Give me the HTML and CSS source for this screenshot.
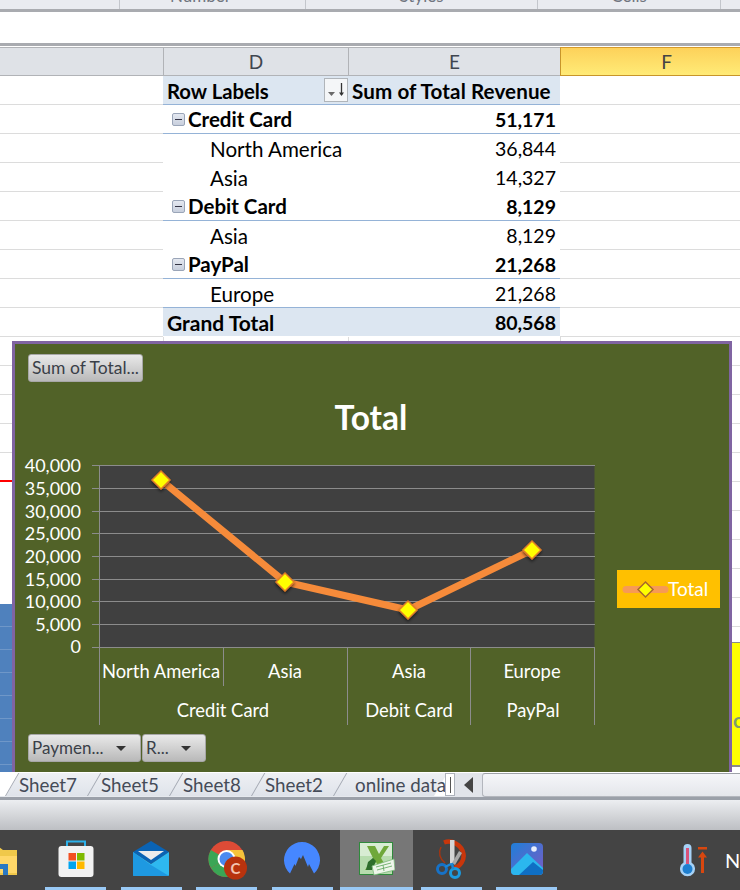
FILE: index.html
```html
<!DOCTYPE html>
<html lang="en">
<head>
<meta charset="utf-8">
<title>Pivot chart</title>
<link rel="stylesheet" href="styles.css">
</head>
<body>
<div class="app">
  <div class="ribbon">
    <div class="rgroup r1"></div>
    <div class="rgroup r2"><span>Number</span></div>
    <div class="rgroup r3"><span>Styles</span></div>
    <div class="rgroup r4"><span>Cells</span></div>
    <div class="rgroup r5"></div>
  </div>
  <div class="formula"></div>
  <div class="sheet">
    <div class="row colhead">
      <div class="hc first"></div><div class="hc">D</div><div class="hc">E</div><div class="hc active">F</div>
    </div>
    <div class="row">
      <div class="c"></div>
      <div class="c p head lab">Row Labels
        <span class="sortbtn"><svg width="22" height="22" viewBox="0 0 22 22"><path d="M3 13h7l-3.500 4z" fill="#6a6a6a"/><path d="M16.500 4v12" stroke="#333" stroke-width="1.300"/><path d="M14 13.500l2.500 3.500 2.500-3.500z" fill="#333"/></svg></span>
      </div>
      <div class="c p head sum">Sum of Total Revenue</div>
      <div class="c"></div>
    </div>
    <div class="row">
      <div class="c"></div>
      <div class="c p grp lab"><span class="tog"></span>Credit Card</div>
      <div class="c p grp num">51,171</div>
      <div class="c"></div>
    </div>
    <div class="row">
      <div class="c"></div>
      <div class="c p sub">North America</div>
      <div class="c p val">36,844</div>
      <div class="c"></div>
    </div>
    <div class="row">
      <div class="c"></div>
      <div class="c p sub">Asia</div>
      <div class="c p val">14,327</div>
      <div class="c"></div>
    </div>
    <div class="row">
      <div class="c"></div>
      <div class="c p grp lab"><span class="tog"></span>Debit Card</div>
      <div class="c p grp num">8,129</div>
      <div class="c"></div>
    </div>
    <div class="row">
      <div class="c"></div>
      <div class="c p sub">Asia</div>
      <div class="c p val">8,129</div>
      <div class="c"></div>
    </div>
    <div class="row">
      <div class="c"></div>
      <div class="c p grp lab"><span class="tog"></span>PayPal</div>
      <div class="c p grp num">21,268</div>
      <div class="c"></div>
    </div>
    <div class="row">
      <div class="c"></div>
      <div class="c p sub last">Europe</div>
      <div class="c p val last">21,268</div>
      <div class="c"></div>
    </div>
    <div class="row">
      <div class="c"></div>
      <div class="c p total gt">Grand Total</div>
      <div class="c p total num">80,568</div>
      <div class="c"></div>
    </div>
    <div class="row stub">
      <div class="s"></div><div class="s v"></div><div class="s v"></div><div class="s v"></div>
    </div>
    <div class="lower">
      <div class="strip left">
        <div class="sr h24"></div><div class="sr"></div><div class="sr"></div><div class="sr"></div>
        <div class="sr red"></div>
        <div class="gap-left"></div>
        <div class="blue"></div>
      </div>
      <div class="strip right">
        <div class="sr h24"></div><div class="sr"></div><div class="sr"></div><div class="sr"></div><div class="sr"></div><div class="sr"></div><div class="sr"></div><div class="sr"></div><div class="sr"></div><div class="sr"></div>
        <div class="sr h15"></div>
        <div class="yellow"><span>ot</span></div>
      </div>
    </div>

    <div class="chart">
      <svg class="plot" width="714" height="428" viewBox="15 344 714 428">
        <defs>
          <filter id="sh" x="-40%" y="-40%" width="180%" height="180%">
            <feDropShadow dx="0" dy="2" stdDeviation="1.500" flood-color="#000" flood-opacity=".55"/>
          </filter>
        </defs>
        <rect x="99.500" y="465.500" width="495" height="182" fill="#404040"/>
        <g class="gridl">
          <path d="M92 465.500H595M92 488.500H595M92 511.500H595M92 533.500H595M92 556.500H595M92 579.500H595M92 601.500H595M92 624.500H595M92 647.500H595"/>
          <path d="M99.500 465V725M223.500 647V686M347.500 647V725M470.500 647V725M594.500 647V725"/>
        </g>
        <polyline points="161,480 285,582 408,610 532,550" fill="none" stroke="#f68b3a" stroke-width="7"/>
        <g filter="url(#sh)">
          <path class="mk" d="M161 471l9 9-9 9-9-9z"/>
          <path class="mk" d="M285 573l9 9-9 9-9-9z"/>
          <path class="mk" d="M408 601l9 9-9 9-9-9z"/>
          <path class="mk" d="M532 541l9 9-9 9-9-9z"/>
        </g>
        <text class="title" x="371" y="430" text-anchor="middle">Total</text>
        <g class="yaxis" text-anchor="end">
          <text x="81" y="472">40,000</text>
          <text x="81" y="495">35,000</text>
          <text x="81" y="518">30,000</text>
          <text x="81" y="540">25,000</text>
          <text x="81" y="563">20,000</text>
          <text x="81" y="586">15,000</text>
          <text x="81" y="608">10,000</text>
          <text x="81" y="631">5,000</text>
          <text x="81" y="653">0</text>
        </g>
        <g class="xaxis" text-anchor="middle">
          <text x="161" y="678">North America</text>
          <text x="285" y="678">Asia</text>
          <text x="409" y="678">Asia</text>
          <text x="532" y="678">Europe</text>
          <text x="223" y="717">Credit Card</text>
          <text x="409" y="717">Debit Card</text>
          <text x="533" y="717">PayPal</text>
        </g>
        <rect x="617" y="570" width="103" height="38" fill="#ffc000"/>
        <path d="M626 589.500H665" stroke="#f79a55" stroke-width="7" stroke-linecap="round"/>
        <path class="mk legendmk" d="M645.500 582l7.500 7.500-7.500 7.500-7.500-7.500z"/>
        <text class="legendtxt" x="668" y="596">Total</text>
      </svg>
      <div class="fbtn sumbtn">Sum of Total...</div>
      <div class="filters">
        <div class="fbtn pay">Paymen...<i class="caret"></i></div>
        <div class="fbtn reg">R...<i class="caret"></i></div>
      </div>
    </div>
  </div>

  <div class="tabbar">
    <div class="tabs">
      <div class="tab">Sheet7</div>
      <div class="tab">Sheet5</div>
      <div class="tab">Sheet8</div>
      <div class="tab">Sheet2</div>
      <div class="tab wide">online data</div>
    </div>
    <div class="splitter"><i></i></div>
    <div class="navbtn"><svg width="12" height="18" viewBox="0 0 12 18"><path d="M10 1v16L1 9z" fill="#444"/></svg></div>
    <div class="hscroll"></div>
  </div>
  <div class="statusline"></div>
  <div class="status"></div>

  <div class="taskbar">
    <div class="slot off">
      <svg width="36" height="34" viewBox="0 0 36 34"><path d="M1 5h16l4 3h14v25H1z" fill="#f0c84a"/><path d="M1 14h34v17H1z" fill="#ffd768"/><path d="M12 22h14v11h-5v-6h-9z" fill="#2b79c2"/></svg>
    </div>
    <div class="slot">
      <svg width="36" height="38" viewBox="0 0 36 38">
        <path d="M9 6V1.500h18V6" fill="none" stroke="#2cb1ea" stroke-width="2"/>
        <rect x=".5" y="6" width="35" height="31" rx="3" fill="#f2f2f2"/>
        <rect x="10.500" y="13" width="7.500" height="7.500" fill="#f25022"/><rect x="19" y="13" width="7.500" height="7.500" fill="#7fba00"/>
        <rect x="10.500" y="21.500" width="7.500" height="7.500" fill="#00a4ef"/><rect x="19" y="21.500" width="7.500" height="7.500" fill="#ffb900"/>
      </svg>
    </div>
    <div class="slot">
      <svg width="36" height="36" viewBox="0 0 36 36">
        <path d="M0 11L18 0l18 11-18 12z" fill="#0a63b4"/>
        <path d="M5 10h26L18 19z" fill="#ececec"/>
        <path d="M0 11l18 12 18-12v23a1 1 0 0 1-1 1H1a1 1 0 0 1-1-1z" fill="#2eb8f0"/>
        <path d="M0 11l18 13L36 35H1a1 1 0 0 1-1-1z" fill="#1a8fdc" opacity=".75"/>
      </svg>
    </div>
    <div class="slot">
      <svg width="46" height="46" viewBox="-3.500 -4 46 46">
        <circle cx="19" cy="19" r="18" fill="#dd4b36"/>
        <path d="M19 19L3.400 28A18 18 0 0 1 3.400 10z" fill="#3aa655"/>
        <path d="M19 19L3.400 28A18 18 0 0 0 34.600 28z" fill="#3aa655"/>
        <path d="M19 10H35A18 18 0 0 1 28 35z" fill="#f5c33b"/>
        <circle cx="19" cy="19" r="9" fill="#fff"/><circle cx="19" cy="19" r="7" fill="#4a8af0"/>
        <circle cx="28" cy="28" r="11.500" fill="#b8330e"/>
        <text class="badge" x="28" y="33.500" text-anchor="middle">C</text>
      </svg>
    </div>
    <div class="slot">
      <svg width="36" height="34" viewBox="0 0 36 34">
        <path d="M6 31.500A18 18 0 1 1 30 31.500L25 22l-1 3-5-12-2 4-2-2-3.500 9-1-2z" fill="#4687ff"/>
      </svg>
    </div>
    <div class="slot excel">
      <svg width="36" height="34" viewBox="0 0 36 34">
        <rect x=".5" y=".5" width="33" height="32" fill="#b7dcae" stroke="#2f8a3c"/>
        <path d="M1 1h32v13H1z" fill="#d8ecd3"/>
        <path d="M8 4h8l4 8 5-8h5l-8 12 7 12h-8l-4-8-5 8H6l8-12z" fill="#6fa83a"/>
        <path d="M9 20l5-4 3 3-4 9H7z" fill="#2e6e2c"/>
        <path d="M13 24L35 17l1 11-21 5z" fill="#eef6ea" stroke="#7cb77c" stroke-width=".8"/>
        <path d="M17 25l15-4M18 28l15-4M24 23l1 6" stroke="#5ba35b" stroke-width=".8"/>
      </svg>
    </div>
    <div class="slot">
      <svg width="30" height="40" viewBox="0 0 30 40">
        <path d="M8 3.500C16 .5 26 6 27.500 15c1 6-3 12-9 14" fill="none" stroke="#c9360b" stroke-width="4.500"/>
        <path d="M5 8C2 14 4 20 9 24" fill="none" stroke="#a8340f" stroke-width="1.500"/>
        <path d="M14 1h4.500v24H14z" fill="#d5d5d5"/><path d="M16 24l7-12 3 2-7 12z" fill="#a9a9a9"/>
        <circle cx="6" cy="30" r="4.500" fill="none" stroke="#1672c8" stroke-width="3"/>
        <circle cx="19" cy="34" r="4.500" fill="none" stroke="#1b9be0" stroke-width="3"/>
        <path d="M9 28l6-3M17 30l-1-6" stroke="#1b86d6" stroke-width="2.500"/>
      </svg>
    </div>
    <div class="slot">
      <svg width="32" height="32" viewBox="0 0 32 32">
        <defs><linearGradient id="ph" x1="0" y1="0" x2="1" y2="1"><stop offset="0" stop-color="#1f7fd8"/><stop offset="1" stop-color="#7a5bc4"/></linearGradient></defs>
        <rect width="32" height="32" rx="4" fill="url(#ph)"/>
        <circle cx="23" cy="6" r="2.800" fill="#e8eefc"/>
        <path d="M0 26L16 10l16 15v3a4 4 0 0 1-4 4H4a4 4 0 0 1-4-4z" fill="#2bb7ee"/>
        <path d="M8 32l14-13 10 8v1a4 4 0 0 1-4 4z" fill="#0f6fc4"/>
      </svg>
    </div>
    <div class="tray">
      <svg width="28" height="34" viewBox="0 0 28 34">
        <path d="M3.500 5a4 4 0 0 1 8 0v14.500a7.500 7.500 0 1 1-8 0z" fill="#a6d2f7"/>
        <path d="M6 5h3v16H6z" fill="#d9527a"/>
        <circle cx="7.500" cy="26" r="5" fill="#1e7fd0"/>
        <path d="M18 4h9v2.500h-9z" fill="#d8470f"/>
        <path d="M22.500 8.500l4.500 6h-3V30h-3V14.500h-3z" fill="#d8470f"/>
      </svg>
      <span class="traytext">N</span>
    </div>
  </div>
</div>
</body>
</html>
```
FILE: styles.css
```css
* { box-sizing: border-box; }
html, body { margin: 0; padding: 0; }
body { width: 740px; height: 890px; overflow: hidden; background: #fff; font-family: Lato, "Liberation Sans", sans-serif; color: #000; }
.app { width: 740px; height: 890px; display: flex; flex-direction: column; overflow: hidden; }

.ribbon { height: 9px; display: flex; background: #e9ebf0; overflow: hidden; }
.rgroup { border-right: 1px solid #c3c6cc; height: 9px; text-align: center; font-size: 17px; color: #70757f; line-height: 1; overflow: hidden; }
.rgroup span { display: block; margin-top: -13px; }
.r1 { width: 120px; }
.r2 { width: 186px; padding-right: 24px; }
.r3 { width: 232px; }
.r4 { width: 183px; }
.r5 { flex: 1; border-right: 0; }

.formula { height: 34px; background: #fff; border-top: 3px solid #a9abb0; }

.sheet { position: relative; flex: 1; background: #fff; padding-top: 1px; border-top: 3px solid #a9abb0; }
.row { display: grid; grid-template-columns: 163px 185px 212px 212px; grid-template-rows: 29px; height: 29px; }

.colhead .hc { background: #dfe2e7; border-bottom: 1px solid #b1b3b7; border-left: 1px solid #b1b3b7; border-top: 1px solid #b1b3b7; font-size: 19px; color: #3f4650; text-align: center; line-height: 27px; }
.colhead .hc.first { border-left: 0; }
.colhead .hc.active { background: linear-gradient(#fdd15a, #ffeb77); border-left: 1px solid #c8952a; border-bottom: 1px solid #c8952a; border-top: 1px solid #d59a2b; color: #444; }

.c { border-bottom: 1px solid #dcdcdc; font-size: 19.500px; line-height: 30px; white-space: nowrap; }
.p { padding: 0 4px 0 4px; border-bottom-color: #fff; }
.head { background: #dce6f1; font-weight: 700; border-bottom: 1px solid #95b3d7; font-size: 20.300px; display: flex; align-items: center; padding-top: 1px; }
.lab { position: relative; }
.grp.lab { font-size: 20.500px; }
.head.lab { justify-content: space-between; padding-right: 0; width: 185px; }
.head.sum { padding-left: 4px; font-size: 20.600px; letter-spacing: .1px; }
.sortbtn { width: 24px; height: 24px; background: #f4f6f8; border: 1px solid #b0b5ba; display: flex; align-items: center; justify-content: center; margin-top: -1px; }
.grp { font-weight: 700; border-bottom: 1px solid #95b3d7; }
.grp.lab { display: flex; align-items: center; padding-left: 9px; gap: 3px; }
.tog { width: 13px; height: 13px; border: 1px solid #9aa5b8; border-radius: 2px; background: linear-gradient(#e4e8f0, #c8cfdd); position: relative; flex: none; }
.tog::after { content: ""; position: absolute; left: 2px; right: 2px; top: 5px; height: 1px; background: #334; }
.num, .val { text-align: right; }
.sub { padding-left: 47px; border-bottom-color: #fff; font-size: 20.600px; }
.last { border-bottom: 1px solid #95b3d7; }
.total { background: #dce6f1; font-weight: 700; border-bottom-color: #fff; }
.gt { font-size: 21px; }

.row.stub { height: 5px; grid-template-rows: 5px; }
.s { height: 5px; }
.s.v { border-left: 1px solid #dcdcdc; }

.lower { display: flex; justify-content: space-between; height: 431px; }
.strip { display: flex; flex-direction: column; }
.strip.left { width: 12px; }
.strip.right { width: 8px; }
.sr { height: 29px; border-bottom: 1px solid #dcdcdc; flex: none; }
.sr.h24 { height: 24px; }
.sr.h15 { height: 16px; border-bottom: 1px solid #8a8a8a; }
.sr.red { border-bottom: 2px solid #f00; }
.gap-left { height: 122px; flex: none; }
.blue { height: 168px; background: #4f81bd repeating-linear-gradient(#4f81bd 0 22px, #6f97c8 22px 23px); flex: none; background-position: 0 0; }
.yellow { height: 124px; background: #ffff00; border-bottom: 2px solid #8a8a8a; font-size: 20px; color: #7f9a70; font-weight: 700; line-height: 154px; overflow: hidden; flex: none; white-space: nowrap; padding-left: 1px; }

.chart { position: absolute; left: 12px; top: 295px; width: 720px; height: 431px; background: #516228; border: 3px solid #8064a2; border-bottom: 0; }
.plot { display: block; }
.gridl path { stroke: #8c8c8c; stroke-width: 1; fill: none; }
.mk { fill: #ffff00; stroke: #e07d25; stroke-width: 1.500; }
.legendmk { stroke: #a8682c; }
.title { font: 700 33.500px Lato, sans-serif; fill: #fff; }
.yaxis text { font: 400 18px Lato, sans-serif; fill: #fff; }
.xaxis text { font: 400 18.400px Lato, sans-serif; fill: #fff; }
.legendtxt { font: 400 19px Lato, sans-serif; fill: #fff; }

.fbtn { position: absolute; height: 28px; background: linear-gradient(#e9e9e9, #b9b9b9); border-radius: 3px; border: 1px solid #a7a7a7; font-size: 17.500px; color: #3a3f48; line-height: 26px; padding-left: 3px; white-space: nowrap; }
.sumbtn { left: 13px; top: 10px; width: 115px; }
.filters { position: absolute; left: 13px; top: 390px; display: flex; gap: 1px; }
.filters .fbtn { position: relative; display: flex; align-items: center; justify-content: space-between; padding-right: 14px; font-size: 17px; }
.pay { width: 113px; }
.reg { width: 64px; }
.caret { width: 0; height: 0; border: 5px solid transparent; border-top: 5px solid #333; border-bottom: 0; }

.tabbar { height: 24px; display: flex; background: #e6e9ee; flex: none; }
.tabs { width: 445px; display: flex; overflow: hidden; background: #fff; padding-left: 5px; flex: none; border-bottom: 1px solid #e6e9ee; }
.tab { position: relative; width: 82px; flex: none; font-size: 18.800px; line-height: 24px; color: #454b58; padding-left: 14px; white-space: nowrap; z-index: 0; }
.tab::before { content: ""; position: absolute; inset: 0; background: linear-gradient(#eef0f4, #dfe3ea); border-left: 1px solid #a3a8b2; transform: skewX(-30deg); transform-origin: left bottom; z-index: -1; width: 100px; }
.tab.wide { width: 110px; padding-left: 22px; }
.splitter { width: 10px; background: #fff; border: 1px solid #aeb3bc; display: flex; align-items: center; justify-content: center; height: 23px; flex: none; margin-left: 0; }
.splitter i { width: 1px; height: 16px; background: #555; }
.navbtn { width: 27px; display: flex; align-items: center; justify-content: center; flex: none; background: #e1e4ea; }
.hscroll { flex: 1; background: linear-gradient(#f5f6f9, #e4e6eb); border: 1px solid #b3b6bd; border-right: 0; border-radius: 3px 0 0 3px; border-top-color: #9ea2a8; }

.statusline { height: 3px; background: #9ba0a9; flex: none; }
.status { height: 30px; background: linear-gradient(#eceef1, #bdbfc3); flex: none; }

.taskbar { height: 60px; flex: none; background: #444; display: flex; gap: 14.500px; margin-left: 0; overflow: hidden; padding-left: 0; color: #fff; }
.slot { width: 61px; height: 60px; flex: none; border-bottom: 3px solid #99c9f5; display: flex; align-items: center; justify-content: center; padding-top: 1px; }
.slot.off { margin-left: -30.500px; border-bottom-color: transparent; }
.slot.excel { width: 73px; margin: 0 -7px; background: #777; }
.tray { margin-left: auto; display: flex; align-items: center; gap: 17px; margin-right: -4px; flex: none; width: 64px; }
.traytext { font-size: 20px; color: #fff; }
.badge { font: 700 15px Lato, sans-serif; fill: #f3c4b2; }
```
